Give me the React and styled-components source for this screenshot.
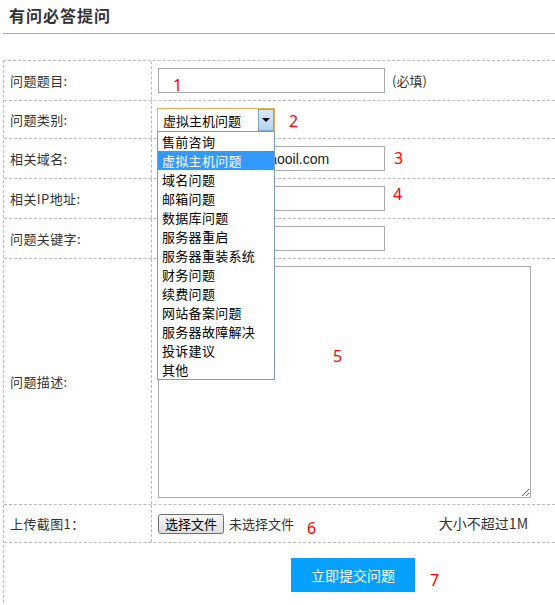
import React from 'react';
import styled, { createGlobalStyle } from 'styled-components';

const Global = createGlobalStyle`
  html, body { margin: 0; padding: 0; background: #fff; }
  body {
    width: 555px; height: 605px; overflow: hidden;
    font-family: "Noto Sans CJK SC", "Noto Sans", sans-serif;
    color: #333;
  }
  * { box-sizing: border-box; }
`;

const Page = styled.div`
  padding-left: 3px;
`;

const Title = styled.h2`
  margin: 0;
  height: 34px;
  padding: 5px 0 0 6px;
  font-size: 16px;
  line-height: 20px;
  font-weight: bold;
  letter-spacing: 1px;
  color: #333;
  border-bottom: 1px solid #aaa;
`;

const Form = styled.div`
  margin-top: 26px;
  width: 552px;
  border-top: 1px dashed #bbb;
  border-left: 1px dashed #bbb;
`;

const Row = styled.div`
  display: grid;
  grid-template-columns: 148px 1fr;
  height: ${p => p.$h}px;
  border-bottom: 1px dashed #bbb;
`;

const Label = styled.div`
  display: flex;
  align-items: center;
  padding-left: 6px;
  font-size: 13px;
  letter-spacing: 0.4px;
  color: #333;
  border-right: 1px dashed #bbb;
`;

const Value = styled.div`
  position: relative;
  display: flex;
  align-items: center;
  padding-left: 6px;
  font-size: 13px;
  color: #333;
`;

const TextInput = styled.input`
  width: 227px;
  height: 25px;
  margin: 0;
  padding: 0 2px;
  border: 1px solid #a9a9a9;
  outline: none;
  background: #fff;
  font-family: "Liberation Sans", Arial, sans-serif;
  font-size: 14px;
  color: #222;
`;

const Hint = styled.span`
  margin-left: 7px;
  font-size: 13px;
  color: #333;
`;

const SelectWrap = styled.div`
  position: relative;
  width: 118px;
  height: 24px;
  margin-top: 1px;
  margin-left: -1px;
`;

const SelectBox = styled.div`
  display: flex;
  align-items: center;
  height: 24px;
  padding-left: 5px;
  border: 1px solid #e2b45a;
  background: #fff;
  font-size: 13px;
  color: #000;
`;

const ArrowBtn = styled.span`
  position: absolute;
  right: 1px;
  top: 1px;
  width: 16px;
  height: 22px;
  border: 1px solid #7ea6cc;
  background: linear-gradient(#dbeafa, #b4d3f2);
  display: flex;
  align-items: center;
  justify-content: center;
`;

const Tri = styled.span`
  width: 0;
  height: 0;
  border-left: 4px solid transparent;
  border-right: 4px solid transparent;
  border-top: 4px solid #000;
`;

const DropList = styled.ul`
  position: absolute;
  z-index: 5;
  left: 0;
  top: 23px;
  width: 118px;
  margin: 0;
  padding: 0;
  list-style: none;
  border: 1px solid #7f9db9;
  background: #fff;
`;

const Option = styled.li`
  height: 19px;
  line-height: 19px;
  padding-left: 4px;
  font-size: 13px;
  letter-spacing: 0.3px;
  color: ${p => (p.$active ? '#fff' : '#000')};
  background: ${p => (p.$active ? '#3399ff' : 'transparent')};
  white-space: nowrap;
`;

const TextArea = styled.textarea`
  width: 373px;
  height: 232px;
  margin: 0;
  padding: 2px;
  border: 1px solid #a9a9a9;
  outline: none;
  resize: both;
  background: #fff;
`;

const FileLine = styled.div`
  display: flex;
  align-items: center;
  width: 373px;
  padding-right: 3px;
`;

const FileBtn = styled.button`
  width: 66px;
  height: 20px;
  margin: 0;
  padding: 0;
  border: 1px solid #707070;
  border-radius: 3px;
  background: linear-gradient(#f6f6f6, #dedede);
  font-family: "Noto Sans CJK SC", sans-serif;
  font-size: 13px;
  line-height: 17px;
  color: #000;
`;

const FileName = styled.span`
  margin-left: 5px;
  font-size: 13px;
  color: #333;
`;

const SizeNote = styled.span`
  margin-left: auto;
  margin-top: -2px;
  font-size: 14px;
  color: #333;
`;

const SubmitArea = styled.div`
  position: relative;
  height: 70px;
  padding: 15px 0 0 287px;
`;

const Submit = styled.button`
  width: 124px;
  height: 34px;
  margin: 0;
  border: none;
  background: #06a0fe;
  color: #fff;
  font-family: "Noto Sans CJK SC", sans-serif;
  font-size: 14px;
  cursor: pointer;
`;

const Mark = styled.span`
  position: absolute;
  left: ${p => p.$x}px;
  top: ${p => p.$y}px;
  font-family: "Noto Sans", sans-serif;
  font-size: 16px;
  line-height: 16px;
  color: #f00;
  pointer-events: none;
  z-index: 2;
`;

const options = [
  '售前咨询', '虚拟主机问题', '域名问题', '邮箱问题', '数据库问题', '服务器重启',
  '服务器重装系统', '财务问题', '续费问题', '网站备案问题', '服务器故障解决', '投诉建议', '其他',
];

export default function App() {
  return (
    <Page>
      <Global />
      <Title>有问必答提问</Title>
      <Form>
        <Row $h={40}>
          <Label>问题题目:</Label>
          <Value>
            <TextInput defaultValue="" />
            <Hint>(必填)</Hint>
            <Mark $x={21} $y={16}>1</Mark>
          </Value>
        </Row>
        <Row $h={38}>
          <Label>问题类别:</Label>
          <Value>
            <SelectWrap>
              <SelectBox>虚拟主机问题</SelectBox>
              <ArrowBtn><Tri /></ArrowBtn>
              <DropList>
                {options.map(o => (
                  <Option key={o} $active={o === '虚拟主机问题'}>{o}</Option>
                ))}
              </DropList>
            </SelectWrap>
            <Mark $x={137} $y={12}>2</Mark>
          </Value>
        </Row>
        <Row $h={40}>
          <Label>相关域名:</Label>
          <Value>
            <TextInput defaultValue="www.zhongshihaiaooil.com" />
            <Mark $x={242} $y={11}>3</Mark>
          </Value>
        </Row>
        <Row $h={40}>
          <Label>相关IP地址:</Label>
          <Value>
            <TextInput defaultValue="" />
            <Mark $x={241} $y={7}>4</Mark>
          </Value>
        </Row>
        <Row $h={40}>
          <Label>问题关键字:</Label>
          <Value>
            <TextInput defaultValue="" />
          </Value>
        </Row>
        <Row $h={246}>
          <Label>问题描述:</Label>
          <Value>
            <TextArea />
            <Mark $x={181} $y={89}>5</Mark>
          </Value>
        </Row>
        <Row $h={38}>
          <Label>上传截图1：</Label>
          <Value>
            <FileLine>
              <FileBtn type="button">选择文件</FileBtn>
              <FileName>未选择文件</FileName>
              <SizeNote>大小不超过1M</SizeNote>
            </FileLine>
            <Mark $x={155} $y={15}>6</Mark>
          </Value>
        </Row>
        <SubmitArea>
          <Submit type="button">立即提交问题</Submit>
          <Mark $x={426} $y={29}>7</Mark>
        </SubmitArea>
      </Form>
    </Page>
  );
}
